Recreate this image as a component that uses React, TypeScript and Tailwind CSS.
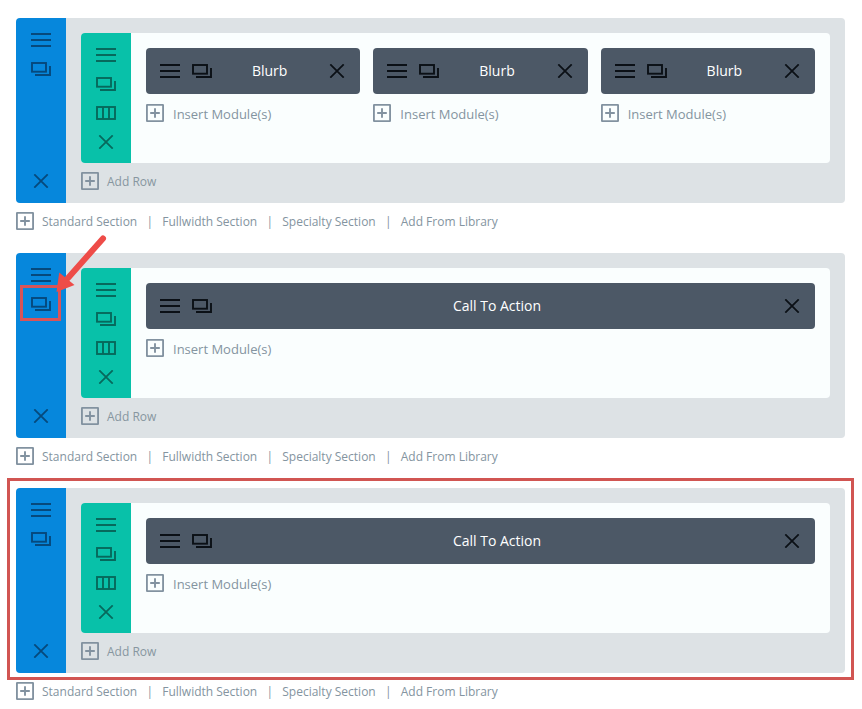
import React from 'react';

interface SectionData {
  id: number;
  modules: string[];
  duplicateMarked?: boolean;
  outlined?: boolean;
}

const SECTIONS: SectionData[] = [
  { id: 1, modules: ['Blurb', 'Blurb', 'Blurb'] },
  { id: 2, modules: ['Call To Action'], duplicateMarked: true },
  { id: 3, modules: ['Call To Action'], outlined: true },
];

const SECTION_LINKS = ['Standard Section', 'Fullwidth Section', 'Specialty Section', 'Add From Library'];

const MenuIcon = () => (
  <svg className="block w-5 h-[14px]" viewBox="0 0 20 14" fill="none" stroke="currentColor" strokeWidth="1.8">
    <path d="M0 1h20M0 7h20M0 13h20" />
  </svg>
);

const DuplicateIcon = () => (
  <svg className="block w-5 h-[14px]" viewBox="0 0 20 14" fill="none" stroke="currentColor" strokeWidth="1.9">
    <rect x="1" y="1" width="14" height="8.7" />
    <path d="M19 4V13H4" />
  </svg>
);

const ColumnsIcon = () => (
  <svg className="block w-5 h-[14px]" viewBox="0 0 20 14" fill="none" stroke="currentColor" strokeWidth="1.9">
    <rect x="1" y="1" width="18" height="12" />
    <path d="M7 1v12M13 1v12" />
  </svg>
);

const CloseIcon = () => (
  <svg className="block w-5 h-[14px]" viewBox="0 0 20 14" fill="none" stroke="currentColor" strokeWidth="1.7">
    <path d="M3.3 0.3l13.4 13.4M16.7 0.3L3.3 13.7" />
  </svg>
);

const PlusIcon = () => (
  <svg className="block w-[18px] h-[18px] shrink-0 text-[#8292a0]" viewBox="0 0 18 18" fill="none" stroke="currentColor" strokeWidth="1.9">
    <rect x="0.9" y="0.9" width="16.2" height="16.2" rx="0.6" />
    <path d="M9 4.2v9.6M4.2 9h9.6" />
  </svg>
);

const IconButton = ({ label, children }: { label: string; children: React.ReactNode }) => (
  <button type="button" aria-label={label} className="block">
    {children}
  </button>
);

const Module = ({ name }: { name: string }) => (
  <div className="flex-1 basis-0">
    <div className="flex items-center h-[46px] pl-[14px] pr-[13px] rounded bg-[#4c5866] text-[#0b1016]">
      <div className="flex gap-3">
        <IconButton label="Module settings"><MenuIcon /></IconButton>
        <IconButton label="Duplicate module"><DuplicateIcon /></IconButton>
      </div>
      <span className="flex-1 text-center text-sm font-medium text-white">{name}</span>
      <IconButton label="Remove module"><CloseIcon /></IconButton>
    </div>
    <button type="button" className="flex items-start gap-[9px] h-[18px] mt-[10px] text-[13px] leading-5 text-[#8494a0]">
      <PlusIcon />
      Insert Module(s)
    </button>
  </div>
);

const Row = ({ modules }: { modules: string[] }) => (
  <div className="flex rounded overflow-hidden bg-[#fafefe]">
    <div className="flex flex-col items-center gap-[15px] w-[50px] shrink-0 pt-[15px] pb-[14px] bg-[#08c1a9] text-[#07695c]">
      <IconButton label="Row settings"><MenuIcon /></IconButton>
      <IconButton label="Duplicate row"><DuplicateIcon /></IconButton>
      <IconButton label="Change columns"><ColumnsIcon /></IconButton>
      <IconButton label="Remove row"><CloseIcon /></IconButton>
    </div>
    <div className="flex flex-1 gap-[13px] p-[15px]">
      {modules.map((name, index) => (
        <Module key={index} name={name} />
      ))}
    </div>
  </div>
);

const Section = ({ modules, duplicateMarked, outlined }: Omit<SectionData, 'id'>) => (
  <section>
    <div className="relative flex">
      <div className="flex flex-col items-center w-[50px] shrink-0 py-[15px] rounded-l bg-[#0687dc] text-[#06497c]">
        <IconButton label="Section settings"><MenuIcon /></IconButton>
        <div className="relative mt-[15px]">
          <IconButton label="Duplicate section"><DuplicateIcon /></IconButton>
          {duplicateMarked && (
            <div className="absolute -left-[11px] -right-[10px] -top-3 -bottom-[10px] border-3 border-[#d85458] pointer-events-none" />
          )}
        </div>
        <div className="mt-auto">
          <IconButton label="Remove section"><CloseIcon /></IconButton>
        </div>
      </div>

      <div className="flex-1 pt-[15px] px-[15px] pb-[13px] rounded-r bg-[#dde2e5]">
        <Row modules={modules} />
        <button type="button" className="flex items-start gap-2 h-[18px] mt-[9px] text-xs leading-5 text-[#8796a0]">
          <PlusIcon />
          Add Row
        </button>
      </div>

      {duplicateMarked && (
        <svg className="absolute left-10 -top-[18px] w-[54px] h-[60px] pointer-events-none" viewBox="0 0 54 60" fill="none">
          <path d="M47 3.5L12 43" stroke="#ee4c48" strokeWidth="6" strokeLinecap="round" />
          <path d="M0.5 57L3.2 37.5L18.5 50Z" fill="#ee4c48" />
        </svg>
      )}
      {outlined && (
        <div className="absolute -inset-x-[9px] -top-[10px] -bottom-[7px] border-3 border-[#d15552] pointer-events-none" />
      )}
    </div>

    <div className="flex items-start h-[18px] mt-[9px] text-xs leading-5 text-[#8494a0]">
      <PlusIcon />
      <ul className="flex ml-2">
        {SECTION_LINKS.map((link, index) => (
          <li key={link} className="flex">
            {index > 0 && <span className="w-[25px] text-center">|</span>}
            <button type="button">{link}</button>
          </li>
        ))}
      </ul>
    </div>
  </section>
);

export default function App() {
  return (
    <main className="min-h-screen flex flex-col gap-[23px] pl-4 pr-[17px] pt-[18px] bg-white font-['Open_Sans','Noto_Sans',sans-serif]">
      {SECTIONS.map(({ id, ...section }) => (
        <Section key={id} {...section} />
      ))}
    </main>
  );
}
